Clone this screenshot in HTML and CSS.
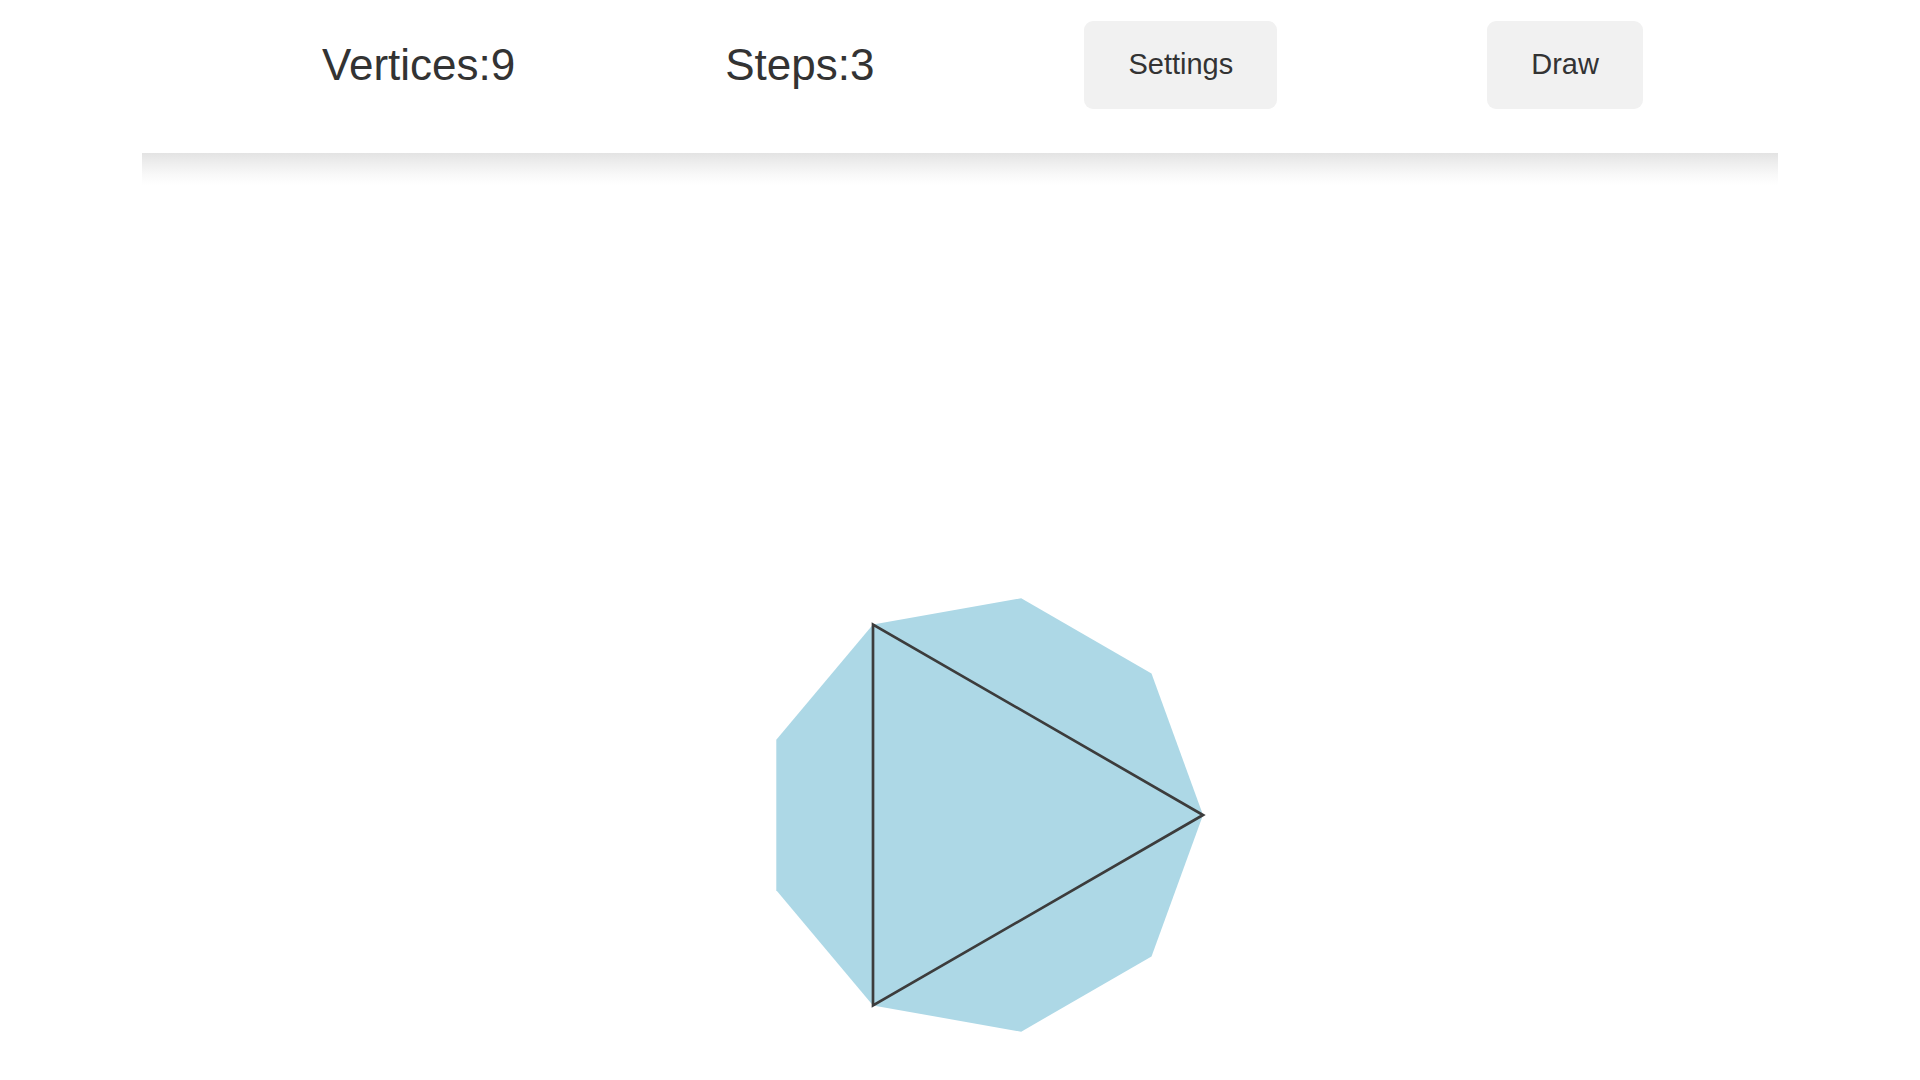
FILE: index.html
```html
<!DOCTYPE html>
<html>
<head>
<meta charset="utf-8">
<link rel="stylesheet" href="styles.css">
</head>
<body>
<div class="app">
  <header class="toolbar">
    <span class="stat">Vertices:9</span>
    <span class="stat">Steps:3</span>
    <button class="btn">Settings</button>
    <button class="btn">Draw</button>
  </header>
  <svg class="canvas" width="1636" height="927" viewBox="0 0 1636 927">
    <polygon class="outer" points="1061,662 1009.5,803.4 879.2,878.7 731,852.5 634.3,737.2 634.3,586.8 731,471.5 879.2,445.3 1009.5,520.6"/>
    <polygon class="inner" points="1061,662 731,852.5 731,471.5"/>
  </svg>
</div>
</body>
</html>
```
FILE: styles.css
```css
html, body {
  margin: 0;
  padding: 0;
  background: #ffffff;
}
body {
  font-family: "Liberation Sans", Arial, sans-serif;
  color: #333333;
  overflow: hidden;
}
.app {
  width: 1636px;
  margin-left: 142px;
}
.toolbar {
  position: relative;
  height: 153px;
  display: flex;
  align-items: center;
  gap: 210px;
  box-sizing: border-box;
  padding-left: 180px;
  padding-bottom: 24px;
  background: #ffffff;
}
.toolbar::after {
  content: "";
  position: absolute;
  left: 0;
  right: 0;
  top: 100%;
  height: 32px;
  background: linear-gradient(to bottom, #e3e3e3 0%, #efefef 35%, #f9f9f9 70%, #ffffff 100%);
}
.stat {
  font-size: 44px;
  line-height: 1;
  color: #333333;
  white-space: nowrap;
}
.btn {
  font-family: inherit;
  font-size: 29px;
  color: #333333;
  background: #f1f1f1;
  border: none;
  border-radius: 9px;
  height: 88px;
  padding: 0 44px;
  white-space: nowrap;
}
.canvas {
  display: block;
}
.outer {
  fill: #add8e6;
}
.inner {
  fill: none;
  stroke: #3c3c3c;
  stroke-width: 2.7;
  stroke-linejoin: miter;
}
```
